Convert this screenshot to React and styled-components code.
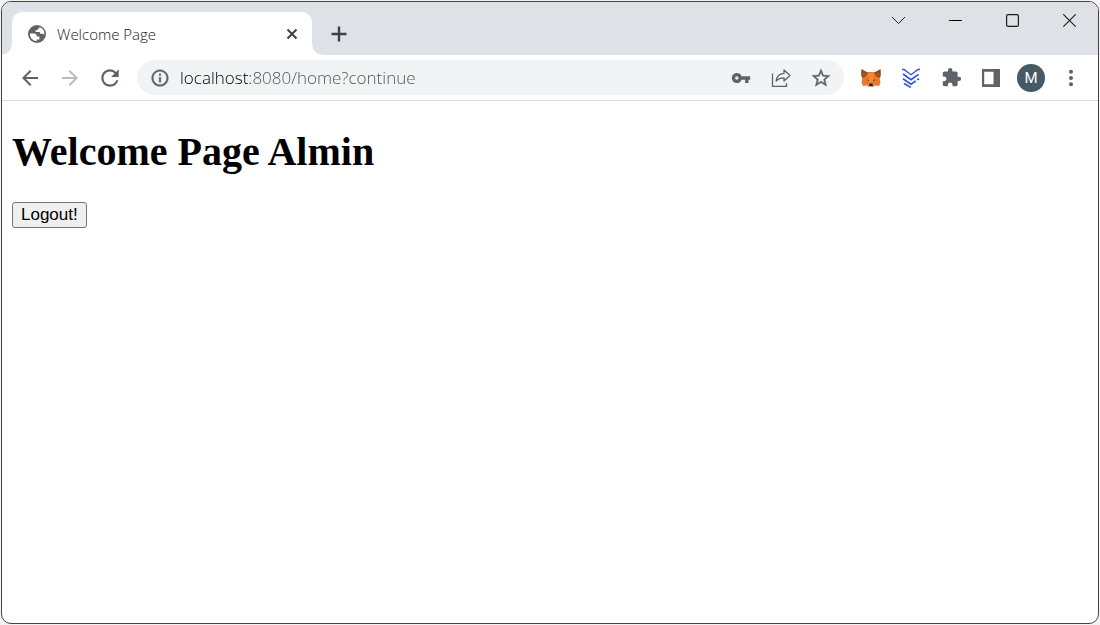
import React from "react";
import styled, { createGlobalStyle } from "styled-components";

const GlobalStyle = createGlobalStyle`
  *, *::before, *::after { box-sizing: border-box; }
  body { margin: 0; background: #f3f3f3; }
`;

const uiFont = '"Open Sans", "Noto Sans", sans-serif';

const Desktop = styled.div`
  display: flex;
  min-height: 100vh;
  padding: 1px;
`;

const BrowserWindow = styled.div`
  flex: 1;
  min-width: 0;
  display: flex;
  flex-direction: column;
  overflow: hidden;
  background: #fff;
  border: 1px solid #444;
  border-radius: 10px;
`;

const TabStrip = styled.header`
  display: flex;
  align-items: flex-end;
  height: 53px;
  padding-left: 10px;
  background: #dee1e6;
`;

const Tab = styled.div`
  position: relative;
  display: flex;
  align-items: center;
  width: 300px;
  height: 43px;
  padding: 0 10px 0 15px;
  background: #fff;
  border-radius: 10px 10px 0 0;
  color: #202124;

  &::before,
  &::after {
    content: "";
    position: absolute;
    bottom: 0;
    width: 10px;
    height: 10px;
  }
  &::before {
    right: 100%;
    background: radial-gradient(circle at 0 0, #dee1e6 9px, #fff 10px);
  }
  &::after {
    left: 100%;
    background: radial-gradient(circle at 100% 0, #dee1e6 9px, #fff 10px);
  }
`;

const TabTitle = styled.span`
  flex: 1;
  margin-left: 10px;
  font: 300 15px/20px ${uiFont};
  white-space: nowrap;
`;

const IconButton = styled.button`
  display: flex;
  flex: none;
  align-items: center;
  justify-content: center;
  width: ${(p) => p.$width || 40}px;
  height: ${(p) => p.$height || 36}px;
  padding: 0;
  border: 0;
  background: none;
  color: ${(p) => p.$color || "#5f6368"};
`;

const WindowControls = styled.div`
  display: flex;
  align-self: flex-start;
  margin-left: auto;
`;

const Toolbar = styled.nav`
  display: flex;
  align-items: center;
  gap: 7px;
  height: 46px;
  padding: 0 7px 0 8px;
  border-bottom: 1px solid #dadce0;
`;

const ButtonGroup = styled.div`
  display: flex;
`;

const AddressBar = styled.form`
  flex: 1;
  min-width: 0;
  display: flex;
  align-items: center;
  height: 35px;
  padding: 0 3px;
  background: #f1f3f4;
  border-radius: 18px;
`;

/* The host is darker than the rest of the address. */
const AddressInput = styled.input`
  flex: 1;
  min-width: 0;
  height: 28px;
  padding: 0;
  border: 0;
  outline: 0;
  font: 300 17px/28px ${uiFont};
  color: transparent;
  caret-color: #202124;
  background: linear-gradient(to right, #000 70px, #4d5154 70px);
  background-clip: text;
`;

const Avatar = styled.span`
  display: flex;
  align-items: center;
  justify-content: center;
  width: 28px;
  height: 28px;
  border-radius: 50%;
  background: #455a64;
  color: #fff;
  font: 15px/28px Roboto, sans-serif;
`;

const Page = styled.main`
  flex: 1;
  padding: 27px 10px 10px;
`;

const Heading = styled.h1`
  margin: 0 0 27px;
  font: bold 40px/47px "Liberation Serif", serif;
  color: #000;
`;

const LogoutButton = styled.button`
  display: block;
  height: 26px;
  padding: 0 8px;
  border: 1px solid #767676;
  border-radius: 3px;
  background: #efefef;
  color: #000;
  font: 17px/24px "Liberation Sans", sans-serif;
`;

const Icon = ({ size = 20, box = 24, children, ...rest }) => (
  <svg width={size} height={size} viewBox={`0 0 ${box} ${box}`} fill="currentColor" aria-hidden="true" {...rest}>
    {children}
  </svg>
);

const Globe = () => (
  <Icon size={20} box={20} color="#5f6368">
    <circle cx="10" cy="10" r="9" />
    <path fill="#fff" d="M2.700 9.600h4.200c1.900 0 2.900 1 2.900 2.900h2.600v3.100H9.600v1.600a7.300 7.300 0 0 1-6.900-7.600z" />
    <path fill="#fff" d="M12.400 3.100a7.300 7.300 0 0 1 4.900 7.700c-.6-.7-1.300-1.100-2.300-1.100h-1.800c0-1.300-.6-1.700-1.700-1.700H8.600V6.300c1.700 0 2.300-.5 2.300-1.800h1.500z" />
  </Icon>
);

const Fox = () => (
  <Icon size={20} box={20}>
    <path fill="#e8792b" d="M.5 1.500L6 4h8l5.500-2.500.2 5.500-1 4 .8 3.500-1.500 3.500-4-.5-2 1.500H8l-2-1.500-4 .5L.5 14.500l.8-3.500-1-4z" />
    <path fill="#8a4a25" d="M.5 1l6.500 4-3 4-3.200.5L.3 6zM19.500 1L13 5l3 4 3.200.5.5-3.500z" />
    <path fill="#a9602e" d="M2 4.500l3 1.500-1.500 1.500H1.800zM18 4.500L15 6l1.500 1.500h1.700z" />
    <path fill="#f5892b" d="M7 5h6l-1.200 9.500H8.200z" />
    <path fill="#7a4a24" d="M5.300 11.300l2.900.9-.9 1.300zM14.700 11.300l-2.900.9.900 1.300z" />
    <path fill="#c9b6a9" d="M7.300 16h5.400l-.9 2.800H8.200z" />
    <path fill="#222" d="M8.600 15.500h2.800l.7 1.700-.8.900H8.700l-.8-.9z" />
  </Icon>
);

const Chevrons = () => (
  <Icon size={20} box={20} fill="none" stroke="#3156d8" strokeWidth="1.700">
    <path d="M1 1.500h2l7 5.200 7-5.200h2" strokeWidth="1.400" />
    <path d="M2 6l8 5.800 7.500-5.400M2 10.700l8 5.600 4.700-3.300M16.200 11.900l1.800-1.200M3 15.500l6.800 3.900" />
  </Icon>
);

export default function App() {
  return (
    <>
      <GlobalStyle />
      <Desktop>
        <BrowserWindow>
          <TabStrip>
            <Tab>
              <Globe />
              <TabTitle>Welcome Page</TabTitle>
              <IconButton $width={20} $height={20} $color="#3c4043" aria-label="Close tab">
                <Icon size={12} box={12} fill="none" stroke="currentColor" strokeWidth="2">
                  <path d="M1.500 1.500l9 9M10.500 1.500l-9 9" />
                </Icon>
              </IconButton>
            </Tab>
            <IconButton $width={54} $height={43} $color="#3c4043" aria-label="New tab">
              <Icon size={16} box={16} fill="none" stroke="currentColor" strokeWidth="2.400">
                <path d="M8 .5v15M.5 8h15" />
              </Icon>
            </IconButton>
            <WindowControls>
              <IconButton $width={57} $height={37} $color="#1b1b1b" aria-label="Search tabs">
                <Icon size={15} box={15} fill="none" stroke="currentColor">
                  <path d="M1 4l6.500 6.500L14 4" />
                </Icon>
              </IconButton>
              <IconButton $width={57} $height={37} $color="#000" aria-label="Minimize">
                <Icon size={13} box={13} fill="none" stroke="currentColor">
                  <path d="M0 6.500h13" />
                </Icon>
              </IconButton>
              <IconButton $width={57} $height={37} $color="#1b1b1b" aria-label="Maximize">
                <Icon size={13} box={13} fill="none" stroke="currentColor" strokeWidth="1.200">
                  <rect x=".6" y=".6" width="11.800" height="11.800" rx="1.500" />
                </Icon>
              </IconButton>
              <IconButton $width={57} $height={37} $color="#1b1b1b" aria-label="Close">
                <Icon size={13} box={13} fill="none" stroke="currentColor" strokeWidth="1.100">
                  <path d="M.3 .3l12.400 12.400M12.700 .3L.3 12.700" />
                </Icon>
              </IconButton>
            </WindowControls>
          </TabStrip>

          <Toolbar>
            <ButtonGroup>
              <IconButton aria-label="Back">
                <Icon size={24}>
                  <path d="M20 11H7.830l5.590-5.590L12 4l-8 8 8 8 1.410-1.410L7.830 13H20v-2z" />
                </Icon>
              </IconButton>
              <IconButton $color="#b9bbbd" aria-label="Forward">
                <Icon size={24}>
                  <path d="M12 4l-1.410 1.410L16.170 11H4v2h12.170l-5.580 5.590L12 20l8-8z" />
                </Icon>
              </IconButton>
              <IconButton aria-label="Reload">
                <Icon size={26}>
                  <path d="M17.650 6.350A7.958 7.958 0 0 0 12 4c-4.420 0-7.990 3.580-7.990 8s3.570 8 7.990 8c3.730 0 6.840-2.550 7.730-6h-2.080A5.990 5.990 0 0 1 12 18c-3.310 0-6-2.690-6-6s2.690-6 6-6c1.660 0 3.140.690 4.220 1.780L13 11h7V4l-2.350 2.350z" />
                </Icon>
              </IconButton>
            </ButtonGroup>

            <AddressBar onSubmit={(e) => e.preventDefault()}>
              <IconButton type="button" aria-label="Site information">
                <Icon size={20}>
                  <path stroke="currentColor" strokeWidth=".5" d="M11 7h2v2h-2zm0 4h2v6h-2zm1-9C6.480 2 2 6.480 2 12s4.480 10 10 10 10-4.480 10-10S17.520 2 12 2zm0 18c-4.410 0-8-3.590-8-8s3.590-8 8-8 8 3.590 8 8-3.590 8-8 8z" />
                </Icon>
              </IconButton>
              <AddressInput aria-label="Address" defaultValue="localhost:8080/home?continue" spellCheck={false} />
              <IconButton type="button" aria-label="Passwords">
                <Icon size={20}>
                  <path d="M12.650 10A5.990 5.990 0 0 0 7 6c-3.310 0-6 2.690-6 6s2.690 6 6 6a5.990 5.990 0 0 0 5.650-4H17v4h4v-4h2v-4H12.650zM7 14c-1.100 0-2-.9-2-2s.9-2 2-2 2 .9 2 2-.9 2-2 2z" />
                </Icon>
              </IconButton>
              <IconButton type="button" aria-label="Share">
                <Icon size={20} box={20} fill="none" stroke="currentColor" strokeWidth="1.300">
                  <path d="M1.500 5.500v12.800h14v-3" />
                  <path d="M13 2l6 5.500-6 5.500v-3.200c-3.700 0-6 1-7.800 3.200.4-4.200 3-7.300 7.800-7.700z" strokeLinejoin="round" />
                </Icon>
              </IconButton>
              <IconButton type="button" aria-label="Bookmark this page">
                <Icon size={22}>
                  <path stroke="currentColor" strokeWidth=".4" d="M22 9.240l-7.190-.62L12 2 9.190 8.630 2 9.240l5.460 4.730L5.820 21 12 17.270 18.180 21l-1.630-7.030L22 9.240zM12 15.400l-3.760 2.270 1-4.280-3.320-2.880 4.380-.38L12 6.100l1.710 4.040 4.380.38-3.320 2.880 1 4.280L12 15.400z" />
                </Icon>
              </IconButton>
            </AddressBar>

            <ButtonGroup>
              <IconButton aria-label="MetaMask"><Fox /></IconButton>
              <IconButton aria-label="Wallet extension"><Chevrons /></IconButton>
              <IconButton aria-label="Extensions">
                <Icon size={21}>
                  <path d="M20.500 11H19V7c0-1.100-.9-2-2-2h-4V3.500a2.500 2.500 0 0 0-5 0V5H4c-1.100 0-1.990.9-1.990 2v3.800H3.500c1.490 0 2.700 1.210 2.700 2.700s-1.210 2.700-2.700 2.700H2V20c0 1.100.9 2 2 2h3.800v-1.500c0-1.490 1.210-2.700 2.700-2.700s2.700 1.210 2.700 2.700V22H17c1.100 0 2-.9 2-2v-4h1.500a2.500 2.500 0 0 0 0-5z" />
                </Icon>
              </IconButton>
              <IconButton aria-label="Side panel">
                <Icon size={18} box={18}>
                  <path fillRule="evenodd" d="M0 0h18v18H0zM2.200 2.800v12.400h9.300V2.800z" />
                </Icon>
              </IconButton>
              <IconButton aria-label="Profile"><Avatar>M</Avatar></IconButton>
              <IconButton aria-label="Menu">
                <Icon size={18} box={18}>
                  <circle cx="9" cy="2.800" r="2" />
                  <circle cx="9" cy="9" r="2" />
                  <circle cx="9" cy="15.200" r="2" />
                </Icon>
              </IconButton>
            </ButtonGroup>
          </Toolbar>

          <Page>
            <Heading>Welcome Page Almin</Heading>
            <LogoutButton>Logout!</LogoutButton>
          </Page>
        </BrowserWindow>
      </Desktop>
    </>
  );
}
